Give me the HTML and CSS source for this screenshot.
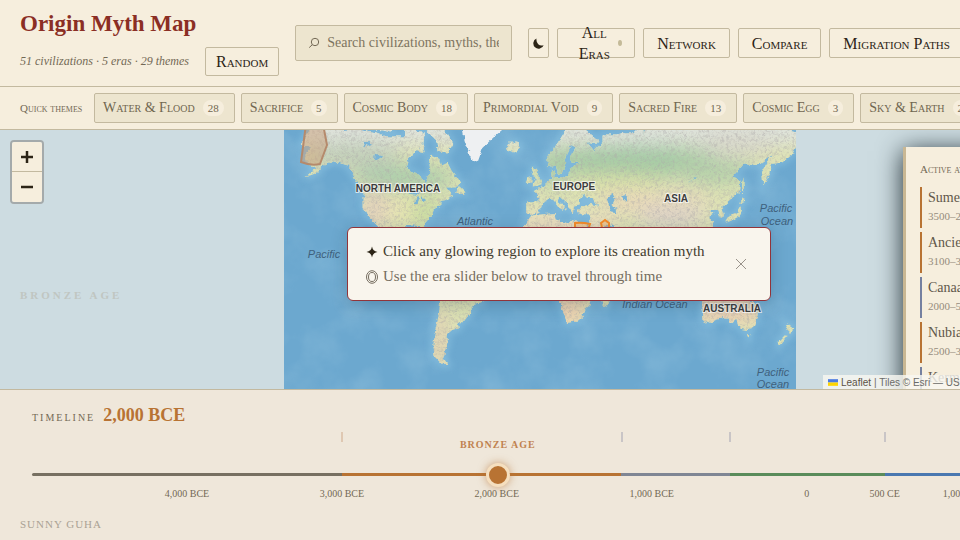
FILE: index.html
```html
<!DOCTYPE html>
<html lang="en">
<head>
<meta charset="utf-8">
<title>Origin Myth Map</title>
<link rel="stylesheet" href="styles.css">
</head>
<body>
<div class="app">
  <header class="header">
    <div class="brand">
      <h1>Origin Myth Map</h1>
      <div class="brand-row">
        <p class="stats">51 civilizations · 5 eras · 29 themes</p>
        <button class="btn random">Random</button>
      </div>
    </div>
    <label class="search">
      <svg class="search-icon" viewBox="0 0 12 12" aria-hidden="true"><circle cx="7" cy="5" r="3.7"/><path d="M4.2 7.8 1.2 10.6"/></svg>
      <input type="text" aria-label="Search" placeholder="Search civilizations, myths, themes">
    </label>
    <nav class="actions">
      <button class="btn moon" aria-label="Toggle dark mode"><svg viewBox="0 0 12 12" aria-hidden="true"><path d="M3.800.6a5.800 5.800 0 1 0 7.800 7.300Q8 9 5.700 6.800 3.300 4.300 3.800.6Z"/></svg></button>
      <button class="btn eras"><span>All Eras</span><i class="dot"></i></button>
      <button class="btn">Network</button>
      <button class="btn">Compare</button>
      <button class="btn">Migration Paths</button>
    </nav>
  </header>

  <section class="themes" aria-label="Quick themes">
    <span class="themes-label">Quick themes</span>
    <button class="chip">Water &amp; Flood <span class="count">28</span></button>
    <button class="chip">Sacrifice <span class="count">5</span></button>
    <button class="chip">Cosmic Body <span class="count">18</span></button>
    <button class="chip">Primordial Void <span class="count">9</span></button>
    <button class="chip">Sacred Fire <span class="count">13</span></button>
    <button class="chip">Cosmic Egg <span class="count">3</span></button>
    <button class="chip">Sky &amp; Earth <span class="count">21</span></button>
  </section>

  <main class="map">
    <svg class="world" viewBox="0 0 512 259" role="img" aria-label="World map">
      <defs>
        <filter id="rough" x="0" y="0" width="1" height="1" filterUnits="objectBoundingBox" color-interpolation-filters="sRGB">
          <feTurbulence type="fractalNoise" baseFrequency=".22" numOctaves="3" seed="4" result="n"/>
          <feDisplacementMap in="SourceGraphic" in2="n" scale="5" xChannelSelector="R" yChannelSelector="G"/>
        </filter>
        <filter id="soft" x="-50%" y="-50%" width="200%" height="200%"><feGaussianBlur stdDeviation="9"/></filter>
        <filter id="halo" x="-10%" y="-10%" width="120%" height="120%"><feGaussianBlur stdDeviation="3"/></filter>
        <filter id="relief" x="0" y="0" width="100%" height="100%">
          <feTurbulence type="fractalNoise" baseFrequency=".35" numOctaves="4" seed="9"/>
          <feColorMatrix values="0 0 0 0 .42  0 0 0 0 .40  0 0 0 0 .40  2.6 0 0 0 -1.15"/>
        </filter>
        <filter id="depth" x="0" y="0" width="100%" height="100%">
          <feTurbulence type="fractalNoise" baseFrequency=".025" numOctaves="4" seed="12"/>
          <feColorMatrix values="0 0 0 0 .62  0 0 0 0 .82  0 0 0 0 .9  2 0 0 0 -.8"/>
        </filter>
        <clipPath id="land-clip"><path id="clip-path"/></clipPath>
      </defs>
      <rect width="512" height="259" fill="#6ca8cf"/>
      <rect width="512" height="259" filter="url(#depth)" opacity=".16"/>
      <path id="shelf" fill="none" stroke="#8cc4e2" stroke-width="6" filter="url(#halo)" opacity=".6"/>
      <g filter="url(#rough)">
        <g clip-path="url(#land-clip)">
          <rect width="512" height="259" fill="#dde2b4"/>
          <g filter="url(#soft)">
            <rect x="-20" y="-20" width="560" height="34" fill="#dfe3dc"/>
            <ellipse cx="70" cy="26" rx="48" ry="15" fill="#c3d0b9"/>
            <ellipse cx="120" cy="48" rx="52" ry="12" fill="#aacdaa"/>
            <ellipse cx="91" cy="78" rx="14" ry="22" fill="#e3d2bb"/>
            <ellipse cx="122" cy="78" rx="20" ry="14" fill="#e8e5b2"/>
            <ellipse cx="142" cy="82" rx="16" ry="14" fill="#c7dba0"/>
            <ellipse cx="270" cy="36" rx="14" ry="22" fill="#b2cfaa"/>
            <ellipse cx="350" cy="31" rx="86" ry="17" fill="#a6cba5"/>
            <ellipse cx="430" cy="42" rx="40" ry="13" fill="#b6d1aa"/>
            <ellipse cx="330" cy="52" rx="50" ry="8" fill="#dbe2a8"/>
            <ellipse cx="350" cy="71" rx="38" ry="10" fill="#ead8b9"/>
            <ellipse cx="388" cy="87" rx="35" ry="11" fill="#dcd2c7"/>
            <ellipse cx="396" cy="68" rx="32" ry="8" fill="#e9dbbb"/>
            <ellipse cx="276" cy="96" rx="60" ry="9" fill="#f1dac2"/>
            <ellipse cx="452" cy="14" rx="40" ry="12" fill="#d8d8cb"/>
            <ellipse cx="155" cy="210" rx="6" ry="35" fill="#e1c9b3"/>
            <ellipse cx="283" cy="178" rx="20" ry="20" fill="#eed2b0"/>
            <ellipse cx="444" cy="178" rx="40" ry="15" fill="#edcfb4"/>
          </g>
          <rect width="512" height="259" filter="url(#relief)" opacity=".5"/>
        </g>
        <g id="ice" fill="#eef0f2"></g>
        <g id="lakes" fill="#7ab4d6"></g>
      </g>
      <path class="region faded" d="M22-6 17 32q10 4 19 2l7-19-4-21z"/>
      <path class="region lit" d="M291 93q7-1 15 1l-2 6h-13zM317 93l4-3 4 3v5h-7z"/>
      <g class="continents">
        <text x="114" y="62">NORTH AMERICA</text>
        <text x="290" y="60">EUROPE</text>
        <text x="392" y="72">ASIA</text>
        <text x="448" y="182">AUSTRALIA</text>
      </g>
      <g class="oceans">
        <text x="191" y="95">Atlantic</text>
        <text x="40" y="128">Pacific</text>
        <text x="492" y="82">Pacific</text>
        <text x="493" y="95">Ocean</text>
        <text x="371" y="178">Indian Ocean</text>
        <text x="489" y="246">Pacific</text>
        <text x="489" y="258">Ocean</text>
      </g>
    </svg>

    <div class="zoom">
      <button aria-label="Zoom in"><svg viewBox="0 0 14 14"><path d="M1 7h12M7 1v12"/></svg></button>
      <button aria-label="Zoom out"><svg viewBox="0 0 14 14"><path d="M1 7h12"/></svg></button>
    </div>
    <p class="era-mark">Bronze Age</p>

    <aside class="panel">
      <h2>Active at 2,000 BCE</h2>
      <ul>
        <li><b>Sumer</b><span>3500–2000 BCE</span></li>
        <li><b>Ancient Egypt</b><span>3100–30 BCE</span></li>
        <li class="iron"><b>Canaan</b><span>2000–500 BCE</span></li>
        <li><b>Nubia</b><span>2500–350 BCE</span></li>
        <li class="iron"><b>Kerma</b><span>2500–1500 BCE</span></li>
      </ul>
    </aside>

    <div class="hint" role="status">
      <div>
        <p><svg viewBox="0 0 12 12" aria-hidden="true"><path d="M6 .5Q6.8 5.2 11.5 6 6.8 6.8 6 11.5 5.2 6.8.5 6 5.2 5.200 6 .5Z"/></svg>Click any glowing region to explore its creation myth</p>
        <p class="second"><svg class="ring" viewBox="0 0 12 14" aria-hidden="true"><ellipse cx="6" cy="7" rx="5.500" ry="6.300"/><ellipse cx="6" cy="7" rx="3.500" ry="4.500"/></svg>Use the era slider below to travel through time</p>
      </div>
      <button class="close" aria-label="Dismiss"><svg viewBox="0 0 12 12"><path d="m1 1 10 10M11 1 1 11"/></svg></button>
    </div>

    <div class="credit"><svg viewBox="0 0 12 8" aria-hidden="true"><path fill="#4c7be1" d="M0 0h12v4H0z"/><path fill="#ffd500" d="M0 4h12v4H0z"/></svg><a href="#">Leaflet</a> | Tiles © Esri — US National Park Service</div>
  </main>

  <footer class="timeline">
    <div class="now"><label for="year">Timeline</label><output for="year">2,000 BCE</output></div>
    <div class="scale">
      <div class="ticks"><i class="bronze" style="left:29.3%"></i><i style="left:55.9%"></i><i style="left:66.1%"></i><i style="left:80.8%"></i><b style="left:44.2%">Bronze Age</b></div>
      <input id="year" type="range" min="-5000" max="1800" value="-2000">
      <div class="years"><span style="left:14.7%">4,000 BCE</span><span style="left:29.4%">3,000 BCE</span><span style="left:44.1%">2,000 BCE</span><span style="left:58.8%">1,000 BCE</span><span style="left:73.5%">0</span><span style="left:80.9%">500 CE</span><span style="left:88.2%">1,000 CE</span></div>
    </div>
    <p class="author">Sunny Guha</p>
  </footer>
</div>
<script src="map.js"></script>
</body>
</html>
```
FILE: styles.css
```css
* { box-sizing: border-box; }

:root {
  --paper: #f6eedd;
  --sand: #ede5cf;
  --line: #c3b99f;
  --ink: #2c2416;
  --muted: #736955;
  --bronze: #b87333;
  --steel: #7f8694;
}

html { overflow: hidden; }
body {
  margin: 0;
  overflow: hidden;
  background: var(--paper);
  color: var(--ink);
  font-family: "Liberation Serif", serif;
}
h1, h2, p, ul { margin: 0; padding: 0; }
button, input { font: inherit; color: inherit; }
button { cursor: pointer; }
svg { display: block; flex: none; }

.app {
  display: flex;
  flex-direction: column;
  min-width: 1118px;
  height: 100vh;
}

/* Header */
.header {
  display: flex;
  align-items: center;
  gap: 16px;
  padding: 10px 20px;
  border-bottom: 1px solid var(--line);
}
.brand { flex: none; }
.brand h1 {
  color: #8b2e24;
  font-size: 23px;
  line-height: 27px;
  font-weight: 700;
}
.brand-row {
  display: flex;
  align-items: center;
  gap: 10px;
  margin-top: 10px;
}
.stats {
  width: 175px;
  color: var(--muted);
  font-size: 12px;
  font-style: italic;
  white-space: nowrap;
}
.btn {
  flex: none;
  height: 30px;
  padding: 0 13px;
  border: 1px solid var(--line);
  border-radius: 2px;
  background: transparent;
  font-size: 16px;
  font-variant: small-caps;
  line-height: 21px;
  white-space: nowrap;
}
.random { height: 29px; padding: 0 10px; }
.search {
  display: flex;
  flex: none;
  align-items: center;
  gap: 7px;
  width: 217px;
  height: 36px;
  padding: 0 12px;
  border: 1px solid var(--line);
  border-radius: 2px;
  background: var(--sand);
  color: var(--muted);
}
.search-icon {
  width: 12px;
  height: 12px;
  fill: none;
  stroke: currentColor;
}
.search input {
  flex: 1;
  min-width: 0;
  padding: 0;
  border: 0;
  outline: 0;
  background: none;
  font-size: 14px;
}
.search input::placeholder { color: #7d745f; opacity: 1; }
.actions { display: flex; gap: 8px; }
.moon { width: 21px; padding: 0 4px; }
.moon svg { width: 11px; height: 11px; fill: var(--ink); }
.eras {
  display: flex;
  align-items: center;
  justify-content: space-between;
  width: 78px;
  padding: 0 12px;
}
.eras span { flex: 1; padding: 0 8px; white-space: normal; }
.dot {
  flex: none;
  width: 4px;
  height: 6px;
  border-radius: 50%;
  background: #c4ba98;
}

/* Theme chips */
.themes {
  display: flex;
  align-items: center;
  gap: 6px;
  padding: 6px 20px;
  border-bottom: 1px solid var(--line);
  white-space: nowrap;
}
.themes-label {
  width: 64px;
  margin-right: 4px;
  color: var(--muted);
  font-size: 11px;
  font-variant: small-caps;
}
.chip {
  display: flex;
  flex: none;
  align-items: center;
  gap: 8px;
  height: 30px;
  padding: 0 10px 0 8px;
  border: 1px solid var(--line);
  border-radius: 2px;
  background: var(--sand);
  color: #706650;
  font-size: 14px;
  font-variant: small-caps;
}
.count {
  padding: 0 5px;
  border-radius: 8px;
  background: var(--paper);
  font-size: 11px;
  line-height: 16px;
}

/* Map */
.map {
  position: relative;
  flex: 1;
  min-height: 0;
  overflow: hidden;
  background: #cddce1;
}
.world {
  position: absolute;
  top: 0;
  left: 284px;
  width: 512px;
  height: 259px;
}
.region { stroke-width: 2; }
.faded { fill: #c9a07c80; stroke: #b58a6c; }
.lit { fill: #f2a45d66; stroke: #f58a27; }
.continents, .oceans {
  font-family: "Liberation Sans", sans-serif;
  text-anchor: middle;
}
.continents {
  fill: #3d3d3d;
  stroke: #ffffffb0;
  stroke-width: 2px;
  paint-order: stroke;
  font-size: 10px;
  font-weight: 700;
}
.oceans { fill: #3f617d; font-size: 11px; font-style: italic; }

.zoom {
  position: absolute;
  top: 10px;
  left: 10px;
  border: 2px solid #a4aaab;
  border-radius: 4px;
  overflow: hidden;
}
.zoom button {
  display: flex;
  align-items: center;
  justify-content: center;
  width: 30px;
  height: 30px;
  padding: 0;
  border: 0;
  background: var(--paper);
}
.zoom button:first-child { border-bottom: 1px solid var(--line); }
.zoom svg { width: 14px; height: 14px; fill: none; stroke: var(--ink); stroke-width: 2.5; }

.era-mark {
  position: absolute;
  top: 158px;
  left: 20px;
  color: #c0c6c1;
  font-size: 11px;
  font-weight: 700;
  letter-spacing: 3px;
  line-height: 14px;
  text-transform: uppercase;
}

.panel {
  position: absolute;
  top: 17px;
  right: 16px;
  bottom: -20px;
  width: 199px;
  padding: 16px 14px;
  border-left: 3px solid #c9b793;
  background: var(--paper);
  box-shadow: 0 4px 24px #1d2a30;
}
.panel h2 {
  margin-bottom: 11px;
  color: var(--muted);
  font-size: 11px;
  font-weight: 400;
  font-variant: small-caps;
  line-height: 13px;
}
.panel ul { display: grid; gap: 4px; list-style: none; }
.panel li {
  height: 41px;
  padding: 1px 6px;
  border-left: 2px solid var(--bronze);
}
.panel li.iron { border-color: #7580a0; }
.panel b, .panel li span { display: block; line-height: 19px; }
.panel b { color: #61574a; font-size: 14px; font-weight: 400; }
.panel li span { color: #958c7c; font-size: 11px; }

.hint {
  position: absolute;
  top: 97px;
  left: 50%;
  display: flex;
  align-items: center;
  justify-content: space-between;
  width: 424px;
  padding: 11px 23px 11px 18px;
  border: 1px solid #91343a;
  border-radius: 6px;
  background: #f9f5ed;
  box-shadow: 0 4px 16px #1b3a5040;
  transform: translateX(-50%);
  font-size: 15px;
  line-height: 25px;
}
.hint p { display: flex; align-items: center; gap: 5px; color: #443c2f; white-space: nowrap; }
.hint p svg { width: 12px; height: 12px; fill: var(--ink); }
.hint .second { color: #756d60; }
.hint p .ring { height: 14px; fill: none; stroke: currentColor; stroke-width: 1; }
.close { padding: 0; border: 0; background: none; }
.close svg { width: 12px; height: 12px; fill: none; stroke: #99928a; }

.credit {
  position: absolute;
  right: 0;
  bottom: 0;
  display: flex;
  align-items: center;
  gap: 3px;
  width: 295px;
  height: 14px;
  padding: 0 5px;
  background: #f8f6f0d0;
  color: #6b6b68;
  font-family: "Liberation Sans", sans-serif;
  font-size: 10px;
  white-space: nowrap;
}
.credit svg { width: 10px; height: 7px; }
.credit a { color: #5c5346; text-decoration: none; }

/* Timeline */
.timeline {
  flex: none;
  height: 151px;
  padding: 15px 32px 9px;
  border-top: 1px solid var(--line);
  background: #efe7da;
  color: var(--muted);
}
.now { display: flex; align-items: baseline; gap: 8px; line-height: 20px; }
.now label { font-size: 10px; letter-spacing: 2px; text-transform: uppercase; }
.now output { color: var(--bronze); font-size: 18px; font-weight: 700; }
.ticks { position: relative; height: 36px; margin-top: 4px; }
.ticks i {
  position: absolute;
  width: 2px;
  height: 10px;
  background: #c9c5c6;
}
.ticks .bronze { background: #dfc8b2; }
.ticks b {
  position: absolute;
  top: 6px;
  transform: translateX(-50%);
  color: #c08250;
  font-size: 10px;
  letter-spacing: 1px;
  line-height: 14px;
  text-transform: uppercase;
  white-space: nowrap;
}
#year {
  display: block;
  width: 100%;
  height: 12px;
  margin: 0;
  appearance: none;
  background: none;
  outline: 0;
}
#year::-webkit-slider-runnable-track {
  height: 3px;
  border-radius: 2px;
  background: linear-gradient(to right, #777061 29.4%, var(--bronze) 29.4% 55.9%, var(--steel) 55.9% 66.2%, #5a8c5a 66.2% 80.9%, #4a78b0 80.9%);
}
#year::-webkit-slider-thumb {
  appearance: none;
  width: 24px;
  height: 24px;
  margin-top: -10px;
  border: 3px solid #f5dfbf;
  border-radius: 50%;
  background: var(--bronze);
  box-shadow: 0 0 8px #b87333a0;
}
.years { position: relative; height: 26px; margin-top: 7px; }
.years span {
  position: absolute;
  transform: translateX(-50%);
  font-size: 10px;
  line-height: 14px;
  white-space: nowrap;
}
.author {
  margin: 5px 0 0 -12px;
  color: #aaa294;
  font-size: 11px;
  letter-spacing: 1px;
  line-height: 12px;
  text-transform: uppercase;
}
```
FILE: map.js
```js
// Coastlines as lon,lat pairs, drawn in Web Mercator at 512px per world.
const land = [
  '-168,66 -162,70 -156,71.5 -141,69.6 -128,70 -115,69 -108,68 -95,68 -94,72 -86,69 -81,69 -82,66 -87,64 -93,61 -94,59 -92,57 -85,55.5 -82,53 -80,51.3 -79,54 -77,57 -78,60 -77,62.4 -70,61 -69,59 -65,60 -62,57 -58,54 -56,52 -60,50 -66,50 -64,48.5 -61,46 -66,44 -70,43.5 -70,41.5 -74,40.5 -76,36 -81,31 -80,26 -83,29 -89,30 -94,29.5 -97,26 -97,20 -110,23 -114,30 -117,32.5 -121,35 -124,40 -124,48 -130,54 -135,59 -145,60.5 -152,59 -158,56 -165,54.5 -158,58 -164,60 -165,63 -161,65',
  '-61,66 -65,63 -72,64 -73,67 -80,69.5 -88,71 -88,74 -78,73 -68,70',
  '-117,70 -105,69 -102,73 -118,73', '-86,64 -81,63.5 -83,66', '-126,72 -120,71.5 -118,75 -126,75',
  '-59,47.6 -53,46.8 -55,50 -57,51',
  '-24,65.5 -22,64 -18,63.4 -14,65 -16,66.4 -22,66.3',
  '-5,50 1,51 1.5,53 -2,56 -2,57.6 -5,58.6 -6,56.5 -3,54 -5,52', '-10,52 -6,52.3 -6,55 -9,54.5',
  '-9,43.5 -1,43.5 -1.5,46.5 -4.5,48.4 1.5,50.5 8,54 8,57 10.5,57.5 10,54.5 14,54 19,54.5 21,57 24,59 29,60 23,60 21,62 25,65 22,65.7 17,61 18.5,59.5 16,56.5 13,55.5 11,59 6,58.5 5,61.5 12,66 18,69.5 26,71 31,70 41,67 40,66 33,66.5 38,64 44,66.5 44,68.5 54,68.5 60,69 68,69 67,72 72,73 73,68 75,72 80,73 100,76 113,74 130,71.5 140,73 160,70 170,70 180,69 180,65 177,62.5 170,60 163,59.5 162,56 157,51 156,57 163,62.5 155,59.5 143,59.3 135,54.5 141,53 140,48 132,43.2 127.5,40 129.5,36 126.5,34.5 125,39.5 121.5,39 118,39 122,37 119,35 122,31 120,27 110,20 100,10 80,8 70,20 58,25 50,30 35,28 34.5,31.5 36,36.5 30,36.5 27,37 26.5,39.5 30,41 35,42 41,41.3 38,44.5 35,45 31,46.5 28,44 28,41.3 24,40.7 23,37 20,40 19.5,42 14,45.5 12.5,44 18,40.2 16,38 12,41.7 9,44.4 3.5,43.3 0,39.5 -2,36.8 -6,36.2 -9,37.2',
  '130,31.5 136,33.5 140.5,35.5 142,39.5 141,41 139,38 133,35.5', '140,42 145,43.3 142,45.5', '142,46 143.5,49 143,54 142,52',
  '-6,35.8 10,37.2 11,33.5 20,31 22,33 32,31.2 36,22 43,12 51,11 40,-10 40,-16 35,-22 35,-24 32.5,-26 30,-31 26,-34 19,-34.7 17,-30 14,-22 12,-15 9,0 -8,5 -17,15 -16,24 -10,31',
  '44,-17 50,-15 47,-25 44,-24',
  '-70,-15 -70.5,-25 -71.5,-32 -74,-40 -75,-47 -74,-52 -69,-55 -65,-55 -68,-52.5 -66,-48 -65,-45 -65,-41 -62,-39 -57,-38 -58,-34.5 -54,-34.5 -48,-28 -48,-25 -41,-22 -38,-15',
  '114,-22 115,-34 118,-35 124,-33 131,-31.5 135,-35 138,-33 140,-38 146,-39 150,-37 153,-31 153,-25 146,-19 136,-12 122,-18',
  '145,-41 148,-41 147,-43.5', '173,-35 178,-38 176,-41 174,-39', '173,-41 174,-42 168,-47 167,-45.5'
];
const ice = ['-57,76 -55,71 -53,67 -48,61 -44,60 -40,65 -32,68 -22,71 -20,76'];
const lakes = [
  '47,45 51,47 53,45 51,42 53,40 53.5,37 50,37.5 49,40', '58,44 61,44 61,46.5 58,46',
  '-92,47 -85,46.5 -85,48 -88,49', '-88,42 -86,42 -85,45.5 -88,45', '-83,43 -80,44 -83,46', '104,52 109,54 110,55.5 107,53',
  '-117,61 -110,62 -116,63', '-124,65 -118,66 -124,67'
];

const radius = 512 / (2 * Math.PI);
function project(pair) {
  const [lon, lat] = pair.split(',').map(Number);
  const x = 256 + lon * 512 / 360;
  const y = 140 - radius * Math.asinh(Math.tan(lat * Math.PI / 180));
  return x.toFixed(1) + ' ' + y.toFixed(1);
}
const outline = shapes => shapes.map(s => 'M' + s.split(' ').map(project).join('L') + 'Z').join('');

document.getElementById('clip-path').setAttribute('d', outline(land));
document.getElementById('shelf').setAttribute('d', outline(land));
for (const [id, shapes] of [['ice', ice], ['lakes', lakes]]) {
  const path = document.createElementNS('http://www.w3.org/2000/svg', 'path');
  path.setAttribute('d', outline(shapes));
  document.getElementById(id).append(path);
}
```
